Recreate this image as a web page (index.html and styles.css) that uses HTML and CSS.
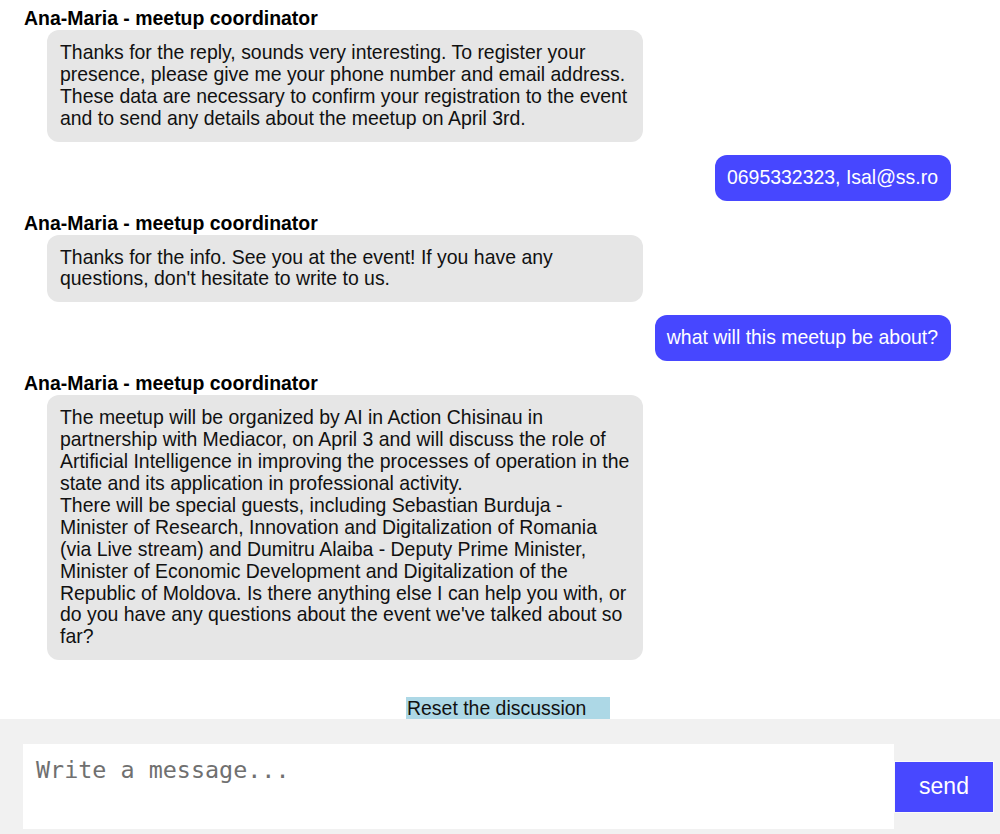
FILE: index.html
```html
<!DOCTYPE html>
<html lang="en">
<head>
<meta charset="utf-8">
<title>Meetup chat</title>
<link rel="stylesheet" href="styles.css">
</head>
<body>
<div class="page">
  <div class="chat">
    <div class="msg bot">
      <div class="name">Ana-Maria - meetup coordinator</div>
      <div class="bubble">Thanks for the reply, sounds very interesting. To register your presence, please give me your phone number and email address. These data are necessary to confirm your registration to the event and to send any details about the meetup on April 3rd.</div>
    </div>
    <div class="msg user">
      <div class="bubble">0695332323, Isal@ss.ro</div>
    </div>
    <div class="msg bot">
      <div class="name">Ana-Maria - meetup coordinator</div>
      <div class="bubble">Thanks for the info. See you at the event! If you have any questions, don't hesitate to write to us.</div>
    </div>
    <div class="msg user">
      <div class="bubble">what will this meetup be about?</div>
    </div>
    <div class="msg bot last">
      <div class="name">Ana-Maria - meetup coordinator</div>
      <div class="bubble">The meetup will be organized by AI in Action Chisinau in partnership with Mediacor, on April 3 and will discuss the role of Artificial Intelligence in improving the processes of operation in the state and its application in professional activity.<br>There will be special guests, including Sebastian Burduja - Minister of Research, Innovation and Digitalization of Romania (via Live stream) and Dumitru Alaiba - Deputy Prime Minister, Minister of Economic Development and Digitalization of the Republic of Moldova. Is there anything else I can help you with, or do you have any questions about the event we've talked about so far?</div>
    </div>
    <div class="reset-row">
      <button class="reset" type="button">Reset the discussion</button>
    </div>
  </div>
  <div class="composer">
    <textarea class="input" placeholder="Write a message..."></textarea>
    <button class="send" type="button">send</button>
  </div>
</div>
</body>
</html>
```

FILE: styles.css
```css
html, body {
  margin: 0;
  padding: 0;
  background: #ffffff;
  overflow: hidden;
}

body {
  font-family: "Liberation Sans", Arial, sans-serif;
  font-size: 19.45px;
  color: #111111;
}

.page {
  width: 1000px;
  height: 834px;
  display: flex;
  flex-direction: column;
}

.chat {
  flex: 1;
  padding: 7px 49px 0 24px;
  display: flex;
  flex-direction: column;
}

.msg {
  display: flex;
  flex-direction: column;
}

.msg.bot {
  align-items: flex-start;
  margin-bottom: 13px;
}

.msg.bot.last {
  margin-bottom: 37px;
}

.msg.user {
  align-items: flex-end;
  margin-bottom: 11px;
}

.name {
  font-weight: bold;
  line-height: 22px;
  margin-bottom: 1px;
  color: #000000;
}

.bubble {
  box-sizing: border-box;
  line-height: 21.9px;
  padding: 12px 12px 12px 13px;
  border-radius: 12px;
}

.bot .bubble {
  background: #e6e6e6;
  margin-left: 23px;
  width: 596px;
  color: #111111;
}

.user .bubble {
  background: #4747ff;
  color: #ffffff;
  padding: 12px 13px 12px 12px;
}

.reset-row {
  display: flex;
  justify-content: center;
  margin-right: -41px;
}

.reset {
  width: 204px;
  height: 22px;
  margin: 0;
  padding: 0 0 0 1px;
  border: none;
  background: #add8e6;
  font-family: "Liberation Sans", Arial, sans-serif;
  font-size: 19.45px;
  line-height: 22px;
  color: #111111;
  text-align: left;
}

.composer {
  background: #f1f1f1;
  height: 115px;
  box-sizing: border-box;
  padding: 25px 0 5px 23px;
  display: flex;
  align-items: center;
}

.input {
  box-sizing: border-box;
  width: 871px;
  height: 85px;
  margin: 0;
  border: none;
  padding: 12px 12px 12px 13px;
  background: #ffffff;
  font-family: "DejaVu Sans Mono", monospace;
  font-size: 23.4px;
  resize: none;
  outline: none;
}

.input::placeholder {
  color: #707070;
}

.send {
  box-sizing: border-box;
  width: 100px;
  height: 52px;
  margin: 0;
  border: 1px solid #fafafa;
  background: #4848ff;
  color: #ffffff;
  font-family: "Liberation Sans", Arial, sans-serif;
  font-size: 23px;
  padding: 0;
}
```
